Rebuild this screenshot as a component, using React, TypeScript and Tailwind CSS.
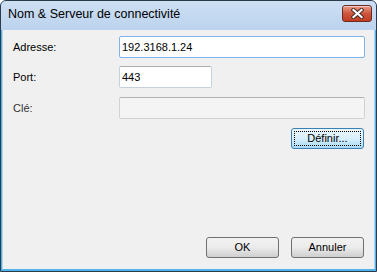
import React from "react";

const ui = { fontFamily: '"Liberation Sans", Arial, sans-serif' };

function CloseButton() {
  return (
    <div className="absolute left-[341px] top-[4px] w-[30px] h-[17px] rounded-[3px] border border-[#6b2a1f] bg-gradient-to-b from-[#e79c88] via-[#cf553d] to-[#c03d21] flex items-center justify-center shadow-[inset_0_1px_0_rgba(255,255,255,0.5)]">
      <svg width="13" height="11" viewBox="0 0 13 11">
        <path d="M2.5 2 L10.5 9 M10.5 2 L2.5 9" stroke="#4a2a26" strokeWidth="4.2" strokeLinecap="square" />
        <path d="M2.5 2 L10.5 9 M10.5 2 L2.5 9" stroke="#ffffff" strokeWidth="2.2" strokeLinecap="square" />
      </svg>
    </div>
  );
}

function Button({ label, focused = false, className = "" }: any) {
  return (
    <div
      className={
        "h-[21px] w-[73px] rounded-[3px] border flex items-center justify-center text-[11px] text-black " +
        (focused
          ? "border-[#3c7fb1] bg-gradient-to-b from-[#eaf6fd] via-[#d9f0fc] to-[#a7d9f5] p-[2px] "
          : "border-[#707070] bg-gradient-to-b from-[#f2f2f2] via-[#ebebeb] to-[#cfcfcf] ") +
        className
      }
    >
      {focused ? (
        <div className="w-full h-full border border-dotted border-black flex items-center justify-center">
          {label}
        </div>
      ) : (
        label
      )}
    </div>
  );
}

export default function App() {
  return (
    <div
      className="relative w-[377px] h-[272px] bg-[#4fb3ea] border border-[#2b3b4d] rounded-t-[6px] flex flex-col overflow-hidden"
      style={ui}
    >
      <div className="h-[29px] shrink-0 bg-gradient-to-b from-[#cddff3] to-[#bcd3ee] flex items-center pl-[7px] pb-[3px]">
        <span className="text-[12.5px] text-black">Nom &amp; Serveur de connectivité</span>
      </div>
      <CloseButton />
      <div className="flex-1 mx-[1px] mb-[2px] border-x border-[#b5d3ef] bg-[#f0f0f0] flex flex-col pt-[6px] pl-[10px] pr-[9px] pb-[11px]">
        <div className="flex items-center h-[22px]">
          <span className="w-[106px] text-[11px] text-black">Adresse:</span>
          <div className="flex-1 h-[22px] bg-white border border-[#7eb4ea] rounded-[2px] flex items-center pl-[2px] text-[11px] text-black">
            192.3168.1.24
          </div>
        </div>
        <div className="flex items-center h-[22px] mt-[8px]">
          <span className="w-[106px] text-[11px] text-black">Port:</span>
          <div className="w-[93px] h-[22px] bg-white border border-[#c5d2de] border-t-[#abadb3] rounded-[2px] flex items-center pl-[2px] text-[11px] text-black">
            443
          </div>
        </div>
        <div className="flex items-center h-[22px] mt-[9px]">
          <span className="w-[106px] text-[11px] text-[#333333]">Clé:</span>
          <div className="flex-1 h-[22px] bg-[#f4f4f4] border border-[#d0d3d6] border-t-[#adb2b5] rounded-[2px]" />
        </div>
        <div className="flex justify-end mt-[9px] pr-[1px]">
          <Button label="Définir..." focused />
        </div>
        <div className="flex-1" />
        <div className="flex justify-end gap-[12px] pr-[1px]">
          <Button label="OK" />
          <Button label="Annuler" />
        </div>
      </div>
    </div>
  );
}
